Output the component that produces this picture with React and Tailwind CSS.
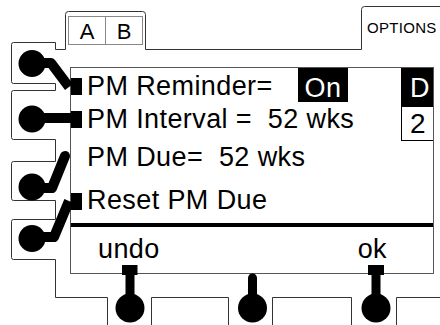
import React from "react";

function Marker({ className = "" }) {
  return <div className={"w-[11px] h-[17px] bg-black shrink-0 " + className} />;
}

export default function App() {
  return (
    <div className="relative w-[440px] h-[325px] bg-white overflow-hidden font-['Liberation_Sans',Arial,sans-serif] text-black">
      {/* A | B tab */}
      <div className="absolute left-[68px] top-[16px] w-[75px] h-[29px] border border-[#888] flex">
        <div className="w-[37px] h-[27px] border-r border-[#888] text-center text-[22px] leading-[25px] pt-[2px]">A</div>
        <div className="flex-1 h-[27px] text-center text-[22px] leading-[25px] pt-[2px]">B</div>
      </div>

      {/* OPTIONS tab label */}
      <div className="absolute left-[367px] top-[20px] text-[15px] leading-[15px] tracking-[0.3px]">OPTIONS</div>

      {/* Screen panel */}
      <div className="absolute left-[70px] top-[67px] w-[364px] h-[207px] border border-[#555] bg-white flex flex-col text-[27px] tracking-[0.4px]">
        <div className="flex h-[155px]">
          <div className="flex-1 flex flex-col">
            <div className="flex h-[34px] items-start">
              <Marker className="mt-[10px]" />
              <div className="ml-[5px] w-[211px] pt-[5px] leading-[26px] whitespace-pre">PM Reminder=</div>
              <div className="w-[50px] h-[34px] bg-black text-white text-center pt-[7px] leading-[26px]">On</div>
            </div>
            <div className="flex h-[38px] items-start">
              <Marker className="mt-[9px]" />
              <div className="ml-[5px] pt-[4px] leading-[26px] whitespace-pre">PM Interval =  52 wks</div>
            </div>
            <div className="flex h-[43px] items-start">
              <div className="w-[11px] shrink-0" />
              <div className="ml-[5px] pt-[4px] leading-[26px] whitespace-pre">PM Due=  52 wks</div>
            </div>
            <div className="flex h-[40px] items-start">
              <Marker className="mt-[10px]" />
              <div className="ml-[5px] pt-[4px] leading-[26px] whitespace-pre">Reset PM Due</div>
            </div>
          </div>
          <div className="w-[32px] flex flex-col">
            <div className="h-[39px] bg-black text-white pl-[9px] pt-[7px] leading-[26px]">D</div>
            <div className="h-[34px] border-l border-b border-black pl-[8px] pt-[4px] text-[28px] leading-[26px]">2</div>
          </div>
        </div>
        <div className="h-[4px] bg-black" />
        <div className="flex-1 flex justify-between pl-[27px] pr-[46px] pt-[9px] leading-[26px]">
          <span>undo</span>
          <span>ok</span>
        </div>
      </div>

      {/* Outline and knobs drawing */}
      <svg className="absolute inset-0 pointer-events-none" width="440" height="325" viewBox="0 0 440 325">
        <path
          d="M 107.5 326 V 297.5 H 55.5 V 259.5 H 13.5 Q 11.5 259.5 11.5 257.5 V 221.5 Q 11.5 219.5 13.5 219.5 H 55.5 V 200.5 H 13.5 Q 11.5 200.5 11.5 198.5 V 163.5 Q 11.5 161.5 13.5 161.5 H 55.5 V 139.5 H 13.5 Q 11.5 139.5 11.5 137.5 V 92.5 Q 11.5 90.5 13.5 90.5 H 55.5 V 83.5 H 13.5 Q 11.5 83.5 11.5 81.5 V 44.5 Q 11.5 42.5 13.5 42.5 H 55.5 V 49.5 H 65.5 V 14.5 Q 65.5 11.5 68.5 11.5 H 142.5 Q 145.5 11.5 145.5 14.5 V 49.5 H 361.5 V 9.5 Q 361.5 6.5 364.5 6.5 H 442"
          fill="none"
          stroke="#333"
          strokeWidth="1"
        />
        <path d="M 151.5 326 V 297.5 H 228.5 V 326" fill="none" stroke="#333" strokeWidth="1" />
        <path d="M 272.5 326 V 297.5 H 351.5 V 326" fill="none" stroke="#333" strokeWidth="1" />
        <path d="M 396.5 326 V 297.5 H 442" fill="none" stroke="#333" strokeWidth="1" />

        {/* left knobs */}
        <circle cx="32" cy="63.5" r="13.5" fill="#000" />
        <polyline points="32,63 51,63 69,87" fill="none" stroke="#000" strokeWidth="10" strokeLinejoin="round" />

        <circle cx="32" cy="119" r="13.5" fill="#000" />
        <line x1="32" y1="118" x2="72" y2="118" stroke="#000" strokeWidth="10" />

        <circle cx="32" cy="187" r="13.5" fill="#000" />
        <polyline points="32,188 52,188 65,156" fill="none" stroke="#000" strokeWidth="10" strokeLinejoin="round" strokeLinecap="round" />

        <circle cx="32" cy="238.5" r="13.5" fill="#000" />
        <polyline points="32,237 54,237 69,201" fill="none" stroke="#000" strokeWidth="10" strokeLinejoin="round" />

        {/* bottom knobs */}
        <circle cx="130" cy="308" r="14.5" fill="#000" />
        <rect x="125.5" y="270" width="9" height="30" fill="#000" />
        <rect x="122" y="265" width="15.5" height="10" fill="#000" />

        <circle cx="252.5" cy="308" r="14.5" fill="#000" />
        <line x1="252.5" y1="278" x2="252.5" y2="300" stroke="#000" strokeWidth="9" strokeLinecap="round" />

        <circle cx="376" cy="308" r="14.5" fill="#000" />
        <rect x="371.5" y="270" width="9" height="30" fill="#000" />
        <rect x="368" y="265" width="16" height="10" fill="#000" />
      </svg>
    </div>
  );
}
